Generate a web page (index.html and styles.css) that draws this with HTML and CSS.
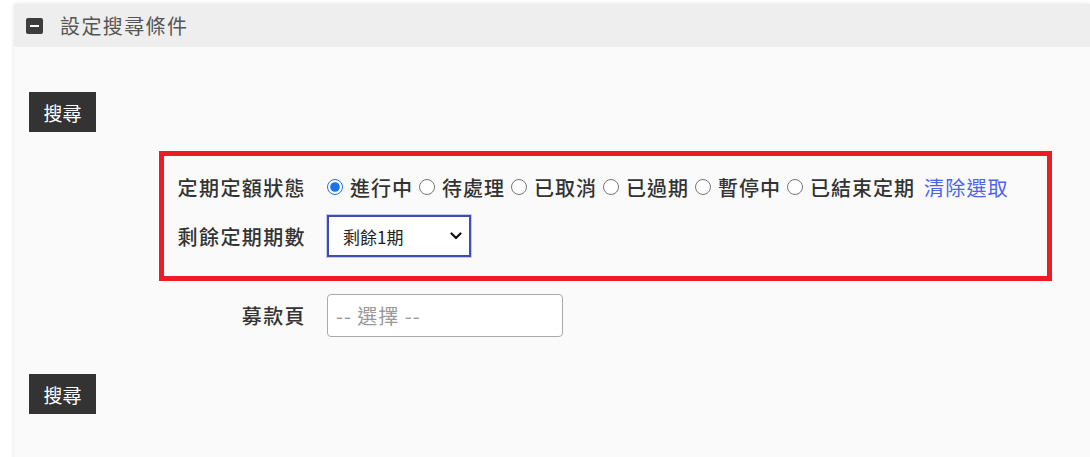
FILE: index.html
```html
<!DOCTYPE html>
<html lang="zh-Hant">
<head>
  <meta charset="UTF-8" />
  <meta name="viewport" content="width=device-width, initial-scale=1.0" />
  <title>設定搜尋條件</title>
  <link rel="stylesheet" href="styles.css">
</head>
<body>
  <div class="panel">
    <div class="panel-head">
      <span class="toggle-icon"></span>
      <span class="panel-title">設定搜尋條件</span>
    </div>
    <div class="panel-body">
      <button class="btn-search">搜尋</button>

      <div class="form-area">
        <div class="highlight-box">
          <div class="form-row">
            <label class="form-label">定期定額狀態</label>
            <div class="radio-group">
              <label class="radio-item"><input type="radio" name="status" checked />進行中</label>
              <label class="radio-item"><input type="radio" name="status" />待處理</label>
              <label class="radio-item"><input type="radio" name="status" />已取消</label>
              <label class="radio-item"><input type="radio" name="status" />已過期</label>
              <label class="radio-item"><input type="radio" name="status" />暫停中</label>
              <label class="radio-item"><input type="radio" name="status" />已結束定期</label>
              <a class="clear-link" href="#">清除選取</a>
            </div>
          </div>
          <div class="form-row">
            <label class="form-label">剩餘定期期數</label>
            <div class="select-wrap">
              <select class="period-select">
                <option>剩餘1期</option>
                <option>剩餘2期</option>
                <option>剩餘3期</option>
              </select>
              <svg class="select-arrow" width="12" height="8" viewBox="0 0 12 8">
                <path d="M1.5 1.5 L6 6 L10.5 1.5" fill="none" stroke="#111" stroke-width="2.2" stroke-linecap="round" stroke-linejoin="round" />
              </svg>
            </div>
          </div>
        </div>

        <div class="form-row plain-row">
          <label class="form-label">募款頁</label>
          <div class="fake-select">-- 選擇 --</div>
        </div>
      </div>

      <button class="btn-search btn-bottom">搜尋</button>
    </div>
  </div>
</body>
</html>
```

FILE: styles.css
```css
/* 搜尋條件面板 */
body {
  margin: 0;
  background: #fff;
  font-family: "Noto Sans CJK TC", "Noto Sans", sans-serif;
  color: #333;
  overflow: hidden;
}

.panel {
  margin: 4px 0 0 14px;
  background: #fafafa;
  box-shadow: 0 0 4px rgba(0, 0, 0, 0.12);
  height: 480px;
}

/* 標題列 */
.panel-head {
  height: 43px;
  background: #eeeeee;
  display: flex;
  align-items: center;
  padding-left: 12px;
}
.toggle-icon {
  width: 17px;
  height: 16px;
  background: #3d3d3d;
  border-radius: 2px;
  display: flex;
  align-items: center;
  justify-content: center;
  margin-right: 17px;
}
.toggle-icon::before {
  content: "";
  width: 9px;
  height: 2px;
  background: #fff;
}
.panel-title {
  font-size: 20px;
  letter-spacing: 1.4px;
  color: #555;
}

.panel-body {
  padding: 45px 15px 0;
}

/* 搜尋按鈕 */
.btn-search {
  display: block;
  width: 67px;
  height: 40px;
  border: none;
  background: #333;
  color: #fff;
  font-family: inherit;
  font-size: 19px;
  cursor: pointer;
  padding: 0;
}
.btn-bottom {
  margin-top: 37px;
}

.form-area {
  margin: 19px 0 0 130px;
}

/* 紅框 */
.highlight-box {
  width: 871px;
  border: 5px solid #ed1c24;
  padding: 10px 0 19px 12px;
  display: flex;
  flex-direction: column;
  gap: 7px;
}

.form-row {
  display: flex;
  align-items: center;
  min-height: 42px;
}
.plain-row {
  margin-top: 13px;
  padding-left: 17px;
}
.form-label {
  width: 130px;
  text-align: right;
  font-size: 20px;
  font-weight: 500;
  letter-spacing: 1.4px;
  color: #333;
  margin-right: 21px;
  white-space: nowrap;
}

.radio-group {
  display: flex;
  align-items: center;
  gap: 6px;
}
.radio-item {
  display: flex;
  align-items: center;
  gap: 7px;
  font-size: 20px;
  font-weight: 500;
  letter-spacing: 1px;
  cursor: pointer;
}
.radio-item input {
  width: 16px;
  height: 16px;
  margin: 0;
  accent-color: #1a73e8;
}
.clear-link {
  font-size: 20px;
  letter-spacing: 1.2px;
  color: #4f63f0;
  text-decoration: none;
  margin-left: 3px;
}

.select-wrap {
  position: relative;
}
.period-select {
  appearance: none;
  width: 144px;
  height: 42px;
  border: 2px solid #3f4db3;
  box-shadow: 0 0 0 1px #c5cae9;
  background: #fff;
  font-family: inherit;
  font-size: 17px;
  color: #222;
  padding: 0 14px;
  border-radius: 0;
  display: block;
}
.select-arrow {
  position: absolute;
  right: 9px;
  top: 17px;
  pointer-events: none;
}

.fake-select {
  width: 236px;
  height: 43px;
  box-sizing: border-box;
  border: 1px solid #aaa;
  border-radius: 4px;
  background: #fff;
  color: #999;
  font-size: 20px;
  letter-spacing: 1px;
  padding: 6px 8px 0;
}
```
